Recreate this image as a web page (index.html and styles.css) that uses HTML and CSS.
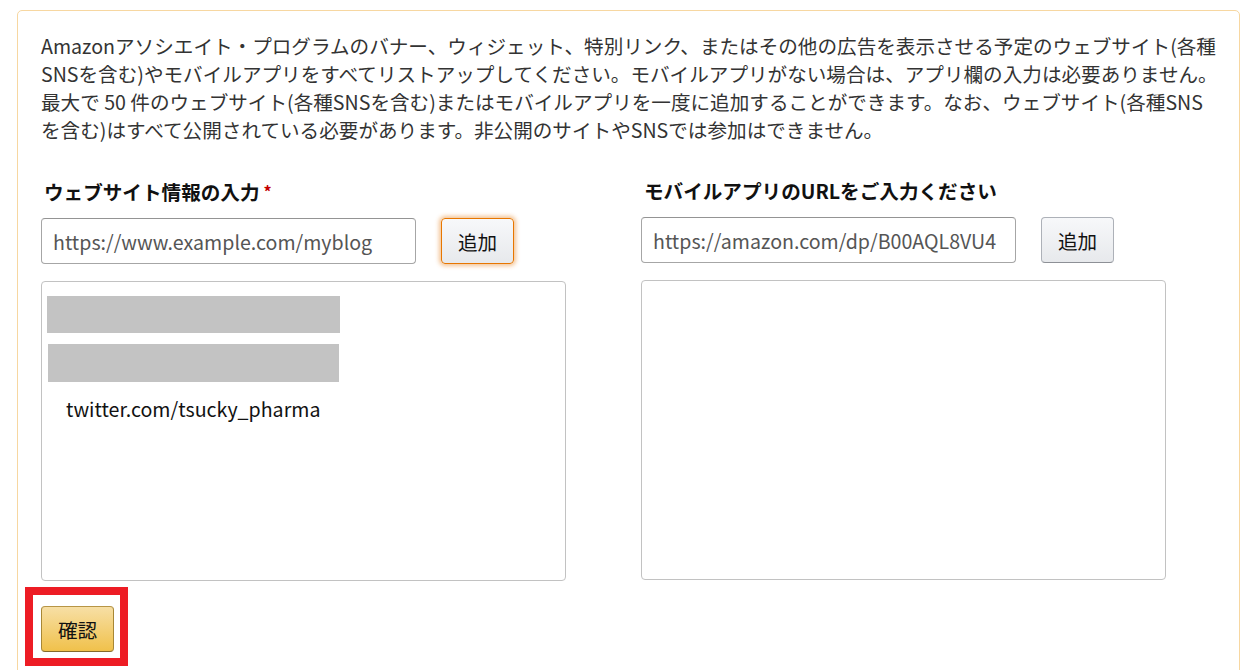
FILE: index.html
```html
<!DOCTYPE html>
<html lang="ja">
<head>
<meta charset="utf-8">
<title>ウェブサイト情報の入力</title>
<link rel="stylesheet" href="styles.css">
</head>
<body>
<div class="box">
  <p class="intro">Amazonアソシエイト・プログラムのバナー、ウィジェット、特別リンク、またはその他の広告を表示させる予定のウェブサイト(各種<br>SNSを含む)やモバイルアプリをすべてリストアップしてください。モバイルアプリがない場合は、アプリ欄の入力は必要ありません。<br>最大で 50 件のウェブサイト(各種SNSを含む)またはモバイルアプリを一度に追加することができます。なお、ウェブサイト(各種SNS<br>を含む)はすべて公開されている必要があります。非公開のサイトやSNSでは参加はできません。</p>
  <div class="cols">
    <div class="col">
      <h3 class="label">ウェブサイト情報の入力<span class="req">*</span></h3>
      <div class="row">
        <input class="field" type="text" placeholder="https://www.example.com/myblog">
        <button class="btn btn-focus" type="button">追加</button>
      </div>
      <div class="list">
        <div class="mask mask-1"></div>
        <div class="mask mask-2"></div>
        <div class="entry">twitter.com/tsucky_pharma</div>
      </div>
    </div>
    <div class="col">
      <h3 class="label">モバイルアプリのURLをご入力ください</h3>
      <div class="row">
        <input class="field" type="text" placeholder="https://amazon.com/dp/B00AQL8VU4">
        <button class="btn" type="button">追加</button>
      </div>
      <div class="list"></div>
    </div>
  </div>
  <div class="highlight">
    <button class="btn-primary" type="button">確認</button>
  </div>
</div>
</body>
</html>
```
FILE: styles.css
```css
html, body {
  margin: 0;
  padding: 0;
  background: #ffffff;
  overflow: hidden;
}
body {
  font-family: "Noto Sans CJK JP", "Noto Sans", sans-serif;
  color: #333333;
  height: 670px;
}
.box {
  margin: 10px 0 0 17px;
  width: 1223px;
  box-sizing: border-box;
  border: 1px solid #f7d7a1;
  border-radius: 5px;
  padding: 21px 23px 40px 23px;
}
.intro {
  margin: 0;
  font-size: 19.6px;
  line-height: 28px;
  color: #333333;
  white-space: nowrap;
}
.cols {
  display: flex;
  margin-top: 33px;
}
.col {
  flex: none;
  width: 600px;
}
.label {
  margin: 0 0 0 3px;
  font-size: 19.6px;
  line-height: 28px;
  font-weight: 700;
  color: #111111;
}
.req {
  color: #c40000;
  font-size: 16px;
  margin-left: 4px;
  vertical-align: 2px;
}
.row {
  display: flex;
  gap: 25px;
  margin-top: 12px;
}
.field {
  width: 375px;
  height: 46px;
  box-sizing: border-box;
  border: 1px solid #a6a6a6;
  border-top-color: #949494;
  border-radius: 4px;
  padding: 0 11px;
  font-family: inherit;
  font-size: 19.6px;
  color: #333;
  background: #fff;
  outline: none;
}
.field::placeholder {
  color: #555555;
  opacity: 1;
}
.btn {
  width: 73px;
  height: 46px;
  box-sizing: border-box;
  border: 1px solid #adb1b8;
  border-bottom-color: #8d9096;
  border-radius: 4px;
  background: linear-gradient(#f7f8fa, #e7e9ec);
  font-family: inherit;
  font-size: 19.6px;
  color: #111111;
  padding: 0;
}
.btn-focus {
  border-color: #e77600;
  box-shadow: 0 0 4px 2px rgba(228, 121, 17, 0.45);
}
.list {
  margin-top: 17px;
  width: 525px;
  height: 300px;
  box-sizing: border-box;
  border: 1px solid #c2c2c2;
  border-radius: 4px;
  padding: 14px 5px;
}
.mask {
  background: #c3c3c3;
}
.mask-1 {
  width: 293px;
  height: 37px;
}
.mask-2 {
  width: 291px;
  height: 38px;
  margin: 11px 0 0 1px;
}
.entry {
  margin: 10px 0 0 19px;
  font-size: 19.6px;
  line-height: 34px;
  color: #111111;
}
.highlight {
  display: inline-block;
  margin: 6px 0 0 -16px;
  border: 8px solid #ed1c24;
  padding: 11px 6px 6px 8px;
}
.btn-primary {
  display: block;
  width: 73px;
  height: 46px;
  box-sizing: border-box;
  border: 1px solid #a88734;
  border-top-color: #b79545;
  border-bottom-color: #846a29;
  border-radius: 4px;
  background: linear-gradient(#f7dfa5, #f0c14b);
  font-family: inherit;
  font-size: 19.6px;
  color: #111111;
  padding: 0;
}
```
